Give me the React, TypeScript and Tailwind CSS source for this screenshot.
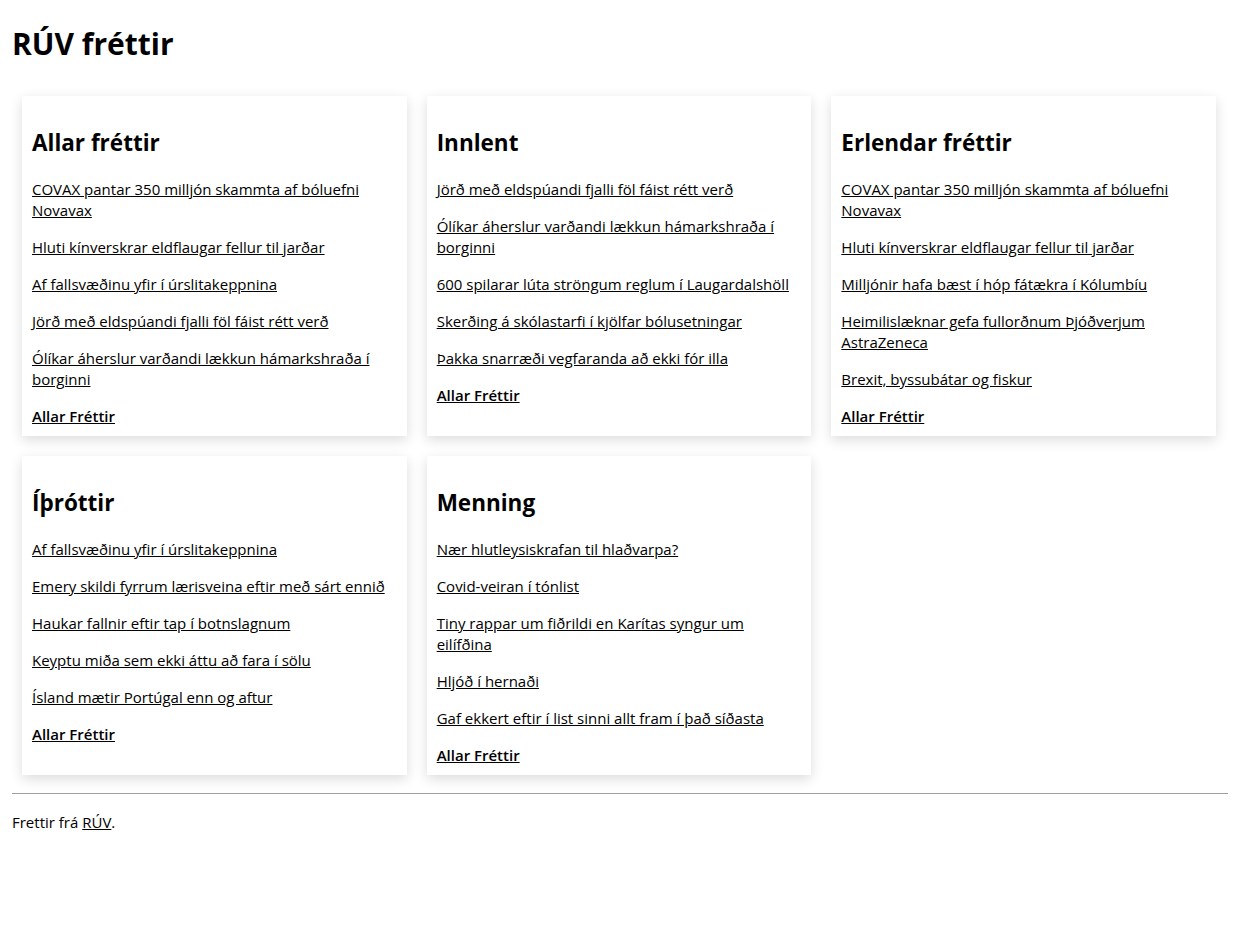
const sections = [
  {
    title: "Allar fréttir",
    items: [
      "COVAX pantar 350 milljón skammta af bóluefni Novavax",
      "Hluti kínverskrar eldflaugar fellur til jarðar",
      "Af fallsvæðinu yfir í úrslitakeppnina",
      "Jörð með eldspúandi fjalli föl fáist rétt verð",
      "Ólíkar áherslur varðandi lækkun hámarkshraða í borginni",
    ],
  },
  {
    title: "Innlent",
    items: [
      "Jörð með eldspúandi fjalli föl fáist rétt verð",
      "Ólíkar áherslur varðandi lækkun hámarkshraða í borginni",
      "600 spilarar lúta ströngum reglum í Laugardalshöll",
      "Skerðing á skólastarfi í kjölfar bólusetningar",
      "Þakka snarræði vegfaranda að ekki fór illa",
    ],
  },
  {
    title: "Erlendar fréttir",
    items: [
      "COVAX pantar 350 milljón skammta af bóluefni Novavax",
      "Hluti kínverskrar eldflaugar fellur til jarðar",
      "Milljónir hafa bæst í hóp fátækra í Kólumbíu",
      "Heimilislæknar gefa fullorðnum Þjóðverjum AstraZeneca",
      "Brexit, byssubátar og fiskur",
    ],
  },
  {
    title: "Íþróttir",
    items: [
      "Af fallsvæðinu yfir í úrslitakeppnina",
      "Emery skildi fyrrum lærisveina eftir með sárt ennið",
      "Haukar fallnir eftir tap í botnslagnum",
      "Keyptu miða sem ekki áttu að fara í sölu",
      "Ísland mætir Portúgal enn og aftur",
    ],
  },
  {
    title: "Menning",
    items: [
      "Nær hlutleysiskrafan til hlaðvarpa?",
      "Covid-veiran í tónlist",
      "Tiny rappar um fiðrildi en Karítas syngur um eilífðina",
      "Hljóð í hernaði",
      "Gaf ekkert eftir í list sinni allt fram í það síðasta",
    ],
  },
];

function NewsCard({ title, items }: { title: string; items: string[] }) {
  return (
    <section className="bg-white px-2.5 pt-2.5 pb-[9px] shadow-[0_4px_12px_rgba(0,0,0,0.14)]">
      <h2 className="mt-[21px] mb-5 text-[22.5px] font-bold leading-8">{title}</h2>
      <ul className="flex flex-col gap-4">
        {items.map((item) => (
          <li key={item} className="leading-[21px]">
            <a href="#" className="underline">{item}</a>
          </li>
        ))}
        <li className="leading-[21px]">
          <a href="#" className="font-semibold underline">Allar Fréttir</a>
        </li>
      </ul>
    </section>
  );
}

export default function App() {
  return (
    <div className="min-h-screen bg-white pl-3 pr-2 text-[15px] text-black" style={{ fontFamily: "'Open Sans', sans-serif" }}>
      <h1 className="mt-[22px] mb-5 text-[30px] font-bold leading-[44px]">RÚV fréttir</h1>

      <main className="grid grid-cols-3 gap-5 py-2.5 pl-2.5 pr-3">
        {sections.map((s) => (
          <NewsCard key={s.title} title={s.title} items={s.items} />
        ))}
      </main>

      <hr className="my-2 border-t border-[#a0a0a0]" />
      <p className="mt-[18px] leading-[21px]">
        Frettir frá <a href="#" className="underline">RÚV</a>.
      </p>
    </div>
  );
}
